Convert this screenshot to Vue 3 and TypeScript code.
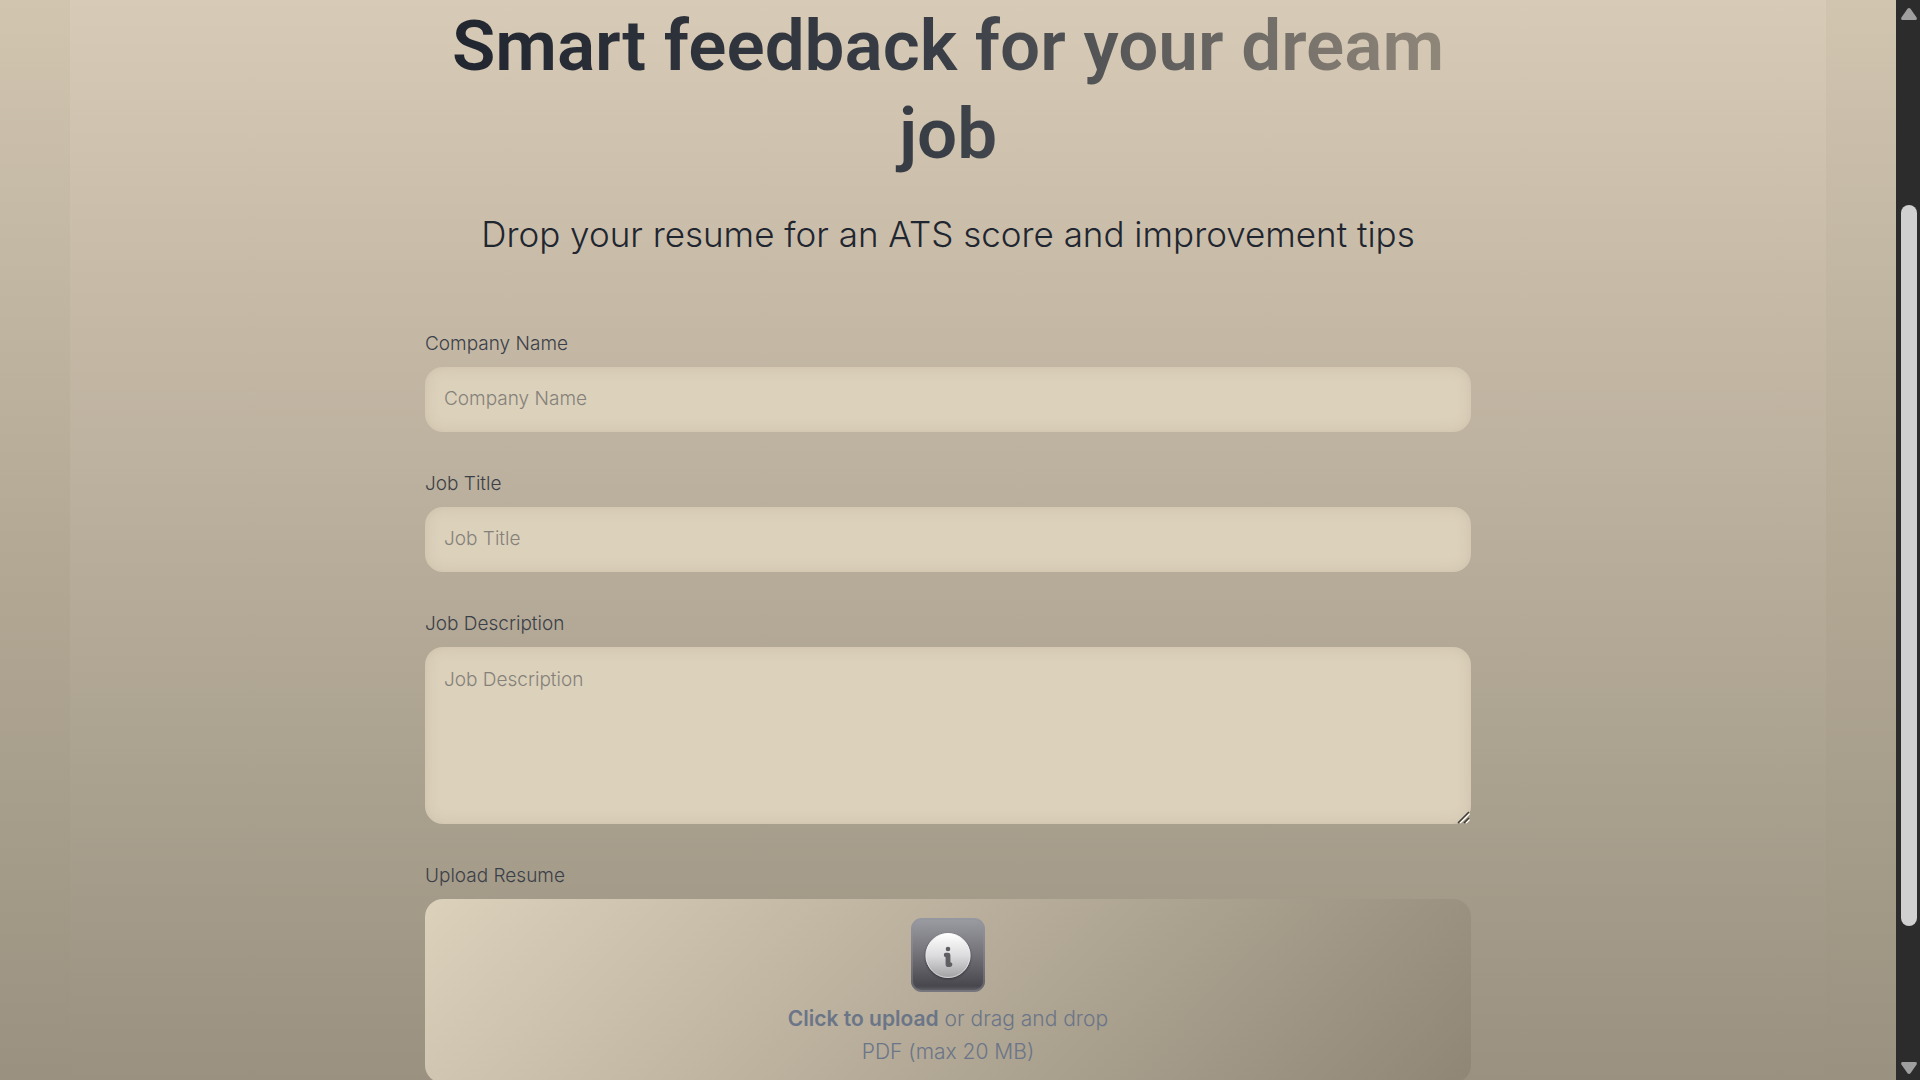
<script setup lang="ts">
import { ref } from 'vue'

interface Field {
  id: string
  label: string
  multiline: boolean
}

const fields: Field[] = [
  { id: 'company-name', label: 'Company Name', multiline: false },
  { id: 'job-title', label: 'Job Title', multiline: false },
  { id: 'job-description', label: 'Job Description', multiline: true },
]

const values = ref<Record<string, string>>({
  'company-name': '',
  'job-title': '',
  'job-description': '',
})
</script>

<template>
  <div class="window">
    <main class="page">
      <section class="section">
        <header class="heading">
          <h1>Smart feedback for your dream job</h1>
          <h2>Drop your resume for an ATS score and improvement tips</h2>
        </header>
        <form class="form" @submit.prevent>
          <div v-for="field in fields" :key="field.id" class="field">
            <label :for="field.id">{{ field.label }}</label>
            <textarea
              v-if="field.multiline"
              :id="field.id"
              v-model="values[field.id]"
              class="control area"
              :placeholder="field.label"
            ></textarea>
            <input
              v-else
              :id="field.id"
              v-model="values[field.id]"
              class="control"
              type="text"
              :placeholder="field.label"
            />
          </div>
          <div class="field">
            <label for="resume">Upload Resume</label>
            <label class="drop" for="resume">
              <svg class="info" viewBox="0 0 74 74" aria-hidden="true">
                <defs>
                  <linearGradient id="tile" x1="0" y1="0" x2="0" y2="1">
                    <stop offset="0" stop-color="#9c9ca3" />
                    <stop offset="0.5" stop-color="#727178" />
                    <stop offset="0.92" stop-color="#48474d" />
                    <stop offset="1" stop-color="#69686e" />
                  </linearGradient>
                  <linearGradient id="disc" x1="0" y1="0" x2="0" y2="1">
                    <stop offset="0" stop-color="#ffffff" />
                    <stop offset="0.5" stop-color="#dcdcde" />
                    <stop offset="1" stop-color="#a2a2a5" />
                  </linearGradient>
                  <linearGradient id="rim" x1="0" y1="0" x2="0" y2="1">
                    <stop offset="0" stop-color="#ffffff" />
                    <stop offset="1" stop-color="#d4d4d6" />
                  </linearGradient>
                  <filter id="shade" x="-20%" y="-20%" width="140%" height="150%">
                    <feDropShadow dx="0" dy="1" stdDeviation="1" flood-color="#242428" flood-opacity="0.6" />
                  </filter>
                </defs>
                <rect width="74" height="74" rx="11" fill="url(#tile)" />
                <rect x="1" y="1" width="72" height="72" rx="10" fill="none" stroke="#92929b" stroke-opacity="0.4" stroke-width="2" />
                <circle cx="37" cy="37.5" r="22" fill="url(#disc)" stroke="url(#rim)" stroke-width="1" filter="url(#shade)" />
                <circle cx="37" cy="31" r="2.3" fill="#5f5f63" />
                <path
                  d="M34.8 34.8H37Q39.4 34.8 39.4 37.2V44.2Q41.6 44.4 41.4 46.6Q41.2 49 39 49H37.4Q34.6 49 34.6 46.2V39.2Q32.8 39 32.8 37Q32.8 34.8 34.8 34.8Z"
                  fill="#5f5f63"
                />
              </svg>
              <span class="hint"><strong>Click to upload</strong> or drag and drop</span>
              <span class="hint">PDF (max 20 MB)</span>
            </label>
            <input id="resume" class="file" type="file" accept=".pdf" />
          </div>
        </form>
      </section>
    </main>
    <div class="scrollbar" aria-hidden="true">
      <svg class="arrow" viewBox="0 0 16 12"><path d="M6.5 .8Q8-.6 9.5 .8L15.6 9.6Q16.4 12 14.5 12H1.5Q-.4 12 .4 9.6Z" fill="#9f9f9f" /></svg>
      <div class="before"></div>
      <div class="thumb"></div>
      <div class="after"></div>
      <svg class="arrow" viewBox="0 0 16 12"><path d="M6.5 11.2Q8 12.6 9.5 11.2L15.6 2.4Q16.4 0 14.5 0H1.5Q-.4 0 .4 2.4Z" fill="#9f9f9f" /></svg>
    </div>
  </div>
</template>

<style>
body {
  margin: 0;
  overflow: hidden;
}
</style>

<style scoped>
*,
*::before,
*::after {
  box-sizing: border-box;
}

.window {
  display: flex;
  height: 100vh;
  overflow: hidden;
  font-family: Inter, 'Liberation Sans', sans-serif;
  font-weight: 300;
}

.page {
  flex: 1;
  min-width: 0;
  height: 100%;
  padding: 0 70px;
  overflow: hidden;
  background: linear-gradient(#d1c5b0, #b3a995 50%, #9a9180);
}

.section {
  display: flex;
  flex-direction: column;
  align-items: center;
  gap: 74px;
  height: 100%;
  padding-top: 2px;
  background: linear-gradient(#d7cab6, #9a9180);
}

.heading {
  display: flex;
  flex-direction: column;
  align-items: center;
  gap: 34px;
  width: 100%;
  max-width: 1046px;
  text-align: center;
}

h1 {
  margin: 0;
  font-family: Roboto, 'Liberation Sans', sans-serif;
  font-size: 71px;
  font-weight: 600;
  line-height: 88px;
  color: transparent;
  background: linear-gradient(to right, #1f242e, #3a3f47 50%, #958b7d);
  background-clip: text;
}

h2 {
  margin: 0;
  font-size: 35px;
  font-weight: 300;
  line-height: 44px;
  color: #1f2630;
  white-space: nowrap;
}

.form {
  display: flex;
  flex-direction: column;
  gap: 38px;
  width: 100%;
  max-width: 1046px;
}

.field {
  display: flex;
  flex-direction: column;
  gap: 9px;
  font-size: 19px;
  line-height: 28px;
  color: #3b4048;
}

.control {
  width: 100%;
  height: 65px;
  padding: 0 19px 2px;
  font: inherit;
  color: #1f2630;
  background: #dcd1bb;
  border: 0;
  border-radius: 18px;
  outline: 0;
  box-shadow: inset 0 0 13px rgba(160, 145, 125, 0.25);
}

.control::placeholder {
  color: #85817a;
  opacity: 1;
}

.area {
  height: 177px;
  padding: 19px;
  resize: vertical;
}

.area::-webkit-resizer {
  background: url("data:image/svg+xml,%3Csvg xmlns='http://www.w3.org/2000/svg' width='15' height='15' fill='none' stroke-width='1.6'%3E%3Cpath d='M4 14L13.5 4.500M10 14L13.500 10.500' stroke='%23fffdf5'/%3E%3Cpath d='M2 14L13 3M8 14L13 9' stroke='%23403d38'/%3E%3C/svg%3E") no-repeat right bottom;
}

.drop {
  display: flex;
  flex-direction: column;
  align-items: center;
  padding: 19px 19px 15px;
  cursor: pointer;
  background: linear-gradient(135deg, #dcd1bb, #8f8676);
  border-radius: 18px;
}

.info {
  width: 74px;
  height: 74px;
  margin-bottom: 10px;
}

.hint {
  font-size: 21px;
  line-height: 33px;
  color: #6b7588;
}

.hint strong {
  font-weight: 600;
}

.file {
  width: 1px;
  height: 1px;
  opacity: 0;
}

.scrollbar {
  display: flex;
  flex: none;
  flex-direction: column;
  align-items: center;
  width: 24px;
  padding: 8px 0 6px 2px;
  background: #2c2c2c;
}

.arrow {
  flex: none;
  width: 16px;
  height: 12px;
}

.before {
  flex: 185;
}

.thumb {
  flex: 721;
  width: 16px;
  background: #d0d0d0;
  border-radius: 8px;
}

.after {
  flex: 136;
}
</style>
